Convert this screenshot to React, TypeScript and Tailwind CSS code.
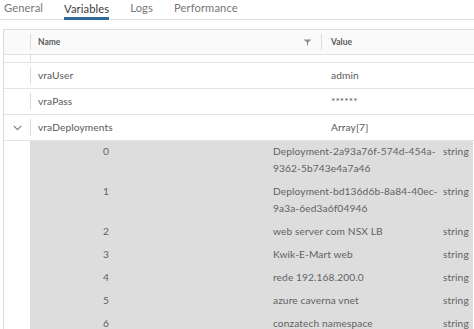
import React from "react";

const Chevron = () => (
  <svg width="9" height="6" viewBox="0 0 9 6" className="block">
    <path d="M0.8 0.8 L4.5 4.6 L8.2 0.8" fill="none" stroke="#7a7a7a" strokeWidth="1.1" />
  </svg>
);

const Filter = () => (
  <svg width="7" height="7" viewBox="0 0 7 7" className="block">
    <path d="M0 0.5 H7 V1.6 H0 Z M1.2 1.6 H5.8 L4 3.8 V6.5 H3 V3.8 Z" fill="#8a8a8a" />
  </svg>
);

const nested: { i: string; v: React.ReactNode }[] = [
  { i: "0", v: (<>Deployment-2a93a76f-574d-454a-<br />9362-5b743e4a7a46</>) },
  { i: "1", v: (<>Deployment-bd136d6b-8a84-40ec-<br />9a3a-6ed3a6f04946</>) },
  { i: "2", v: "web server com NSX LB" },
  { i: "3", v: "Kwik-E-Mart web" },
  { i: "4", v: "rede 192.168.200.0" },
  { i: "5", v: "azure caverna vnet" },
  { i: "6", v: "conzatech namespace" },
];

const Divider = ({ full }: { full?: boolean }) => (
  <div className={full ? "w-px self-stretch bg-[#dcdcdc]" : "w-px self-stretch my-[4px] bg-[#dcdcdc]"} />
);

function Row({ name, value, expand }: { name: string; value: string; expand?: boolean }) {
  return (
    <div className="flex h-[26px] border-b border-[#e4e4e4] text-[10.2px] tracking-[0.1px] text-[#595959]">
      <div className="w-[26px] flex items-center justify-center">{expand ? <Chevron /> : null}</div>
      <Divider />
      <div className="w-[290px] pl-[7px] flex items-center">{name}</div>
      <div className="pl-[10px] flex items-center">{value}</div>
    </div>
  );
}

export default function App() {
  return (
    <div className="w-[474px] h-[329px] overflow-hidden bg-white font-['Lato',sans-serif]">
      <div className="flex items-start h-[20px] border-b border-[#dedede] pl-[4px] gap-[21px] text-[11.2px] tracking-[0.1px]">
        <div className="h-[19px] flex items-center pb-[2px] text-[#777]">General</div>
        <div className="h-[20px] mb-[-1px] flex items-center pt-[1px] border-b-[3px] border-[#2f6a9e] text-[#3a3a3a]">Variables</div>
        <div className="h-[19px] flex items-center pb-[2px] text-[#777]">Logs</div>
        <div className="h-[19px] flex items-center pb-[2px] text-[#777]">Performance</div>
      </div>

      <div className="mt-[9px] ml-[3px] border-l border-t border-[#dcdcdc]">
        <div className="flex h-[25px] bg-[#fafafa] border-b border-[#e0e0e0] text-[8.5px] font-bold text-[#5a5a5a]">
          <div className="w-[26px]" />
          <Divider />
          <div className="w-[290px] pl-[7px] pr-[10px] flex items-center justify-between">
            <span>Name</span>
            <Filter />
          </div>
          <Divider />
          <div className="pl-[9px] flex items-center">Value</div>
        </div>

        <div className="flex h-[8px] border-b border-[#e4e4e4]">
          <div className="w-[26px]" />
          <Divider full />
        </div>

        <Row name="vraUser" value="admin" />
        <Row name="vraPass" value="******" />
        <Row name="vraDeployments" value="Array[7]" expand />

        <div className="flex">
          <div className="w-[26px]" />
          <div className="w-[443px] bg-[#dddddd] text-[10.2px] tracking-[0.1px] text-[#626262]">
            {nested.map((r) => (
              <div key={r.i} className="grid grid-cols-[152px_91px_170px_1fr] pt-[1.5px] pb-[4.5px] leading-[17px]">
                <div className="text-center">{r.i}</div>
                <div />
                <div className="whitespace-nowrap">{r.v}</div>
                <div>string</div>
              </div>
            ))}
          </div>
        </div>
      </div>
    </div>
  );
}
